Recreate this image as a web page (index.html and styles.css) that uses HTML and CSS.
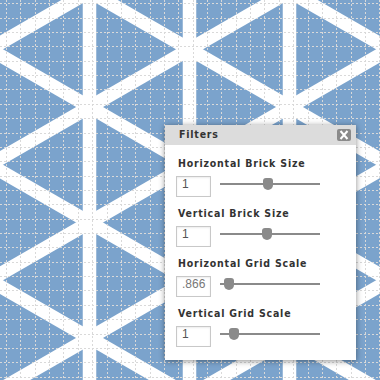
FILE: index.html
```html
<!DOCTYPE html>
<html>
<head>
<meta charset="utf-8">
<link rel="stylesheet" href="styles.css">
</head>
<body>
<div class="desktop">
  <svg class="bg" width="380" height="380" viewBox="0 0 380 380">
    <rect width="380" height="380" fill="#7ba3cc"/>
    <g stroke="#ffffff" stroke-width="13.5">
      <line x1="-10.5" y1="-10" x2="-10.5" y2="390"/>
      <line x1="89.5" y1="-10" x2="89.5" y2="390"/>
      <line x1="189.5" y1="-10" x2="189.5" y2="390"/>
      <line x1="289.5" y1="-10" x2="289.5" y2="390"/>
      <line x1="389.5" y1="-10" x2="389.5" y2="390"/>
      <line x1="-20" y1="-187.16" x2="400" y2="55.33"/>
      <line x1="-20" y1="-71.69" x2="400" y2="170.80"/>
      <line x1="-20" y1="43.78" x2="400" y2="286.27"/>
      <line x1="-20" y1="159.25" x2="400" y2="401.74"/>
      <line x1="-20" y1="274.72" x2="400" y2="517.21"/>
      <line x1="-20" y1="54.77" x2="400" y2="-187.74"/>
      <line x1="-20" y1="170.24" x2="400" y2="-72.27"/>
      <line x1="-20" y1="285.71" x2="400" y2="43.20"/>
      <line x1="-20" y1="401.18" x2="400" y2="158.67"/>
      <line x1="-20" y1="516.65" x2="400" y2="274.14"/>
    </g>
    <g stroke="#d9d9d9" stroke-width="1" stroke-dasharray="2 2">
      <line x1="6.5" y1="0" x2="6.5" y2="380"/>
      <line x1="20.5" y1="0" x2="20.5" y2="380"/>
      <line x1="35.5" y1="0" x2="35.5" y2="380"/>
      <line x1="49.5" y1="0" x2="49.5" y2="380"/>
      <line x1="63.5" y1="0" x2="63.5" y2="380"/>
      <line x1="78.5" y1="0" x2="78.5" y2="380"/>
      <line x1="92.5" y1="0" x2="92.5" y2="380"/>
      <line x1="107.5" y1="0" x2="107.5" y2="380"/>
      <line x1="121.5" y1="0" x2="121.5" y2="380"/>
      <line x1="135.5" y1="0" x2="135.5" y2="380"/>
      <line x1="150.5" y1="0" x2="150.5" y2="380"/>
      <line x1="164.5" y1="0" x2="164.5" y2="380"/>
      <line x1="178.5" y1="0" x2="178.5" y2="380"/>
      <line x1="193.5" y1="0" x2="193.5" y2="380"/>
      <line x1="207.5" y1="0" x2="207.5" y2="380"/>
      <line x1="221.5" y1="0" x2="221.5" y2="380"/>
      <line x1="236.5" y1="0" x2="236.5" y2="380"/>
      <line x1="250.5" y1="0" x2="250.5" y2="380"/>
      <line x1="264.5" y1="0" x2="264.5" y2="380"/>
      <line x1="279.5" y1="0" x2="279.5" y2="380"/>
      <line x1="293.5" y1="0" x2="293.5" y2="380"/>
      <line x1="308.5" y1="0" x2="308.5" y2="380"/>
      <line x1="322.5" y1="0" x2="322.5" y2="380"/>
      <line x1="336.5" y1="0" x2="336.5" y2="380"/>
      <line x1="351.5" y1="0" x2="351.5" y2="380"/>
      <line x1="365.5" y1="0" x2="365.5" y2="380"/>
      <line x1="379.5" y1="0" x2="379.5" y2="380"/>
      <line x1="0" y1="3.5" x2="380" y2="3.5"/>
      <line x1="0" y1="18.5" x2="380" y2="18.5"/>
      <line x1="0" y1="32.5" x2="380" y2="32.5"/>
      <line x1="0" y1="46.5" x2="380" y2="46.5"/>
      <line x1="0" y1="61.5" x2="380" y2="61.5"/>
      <line x1="0" y1="75.5" x2="380" y2="75.5"/>
      <line x1="0" y1="89.5" x2="380" y2="89.5"/>
      <line x1="0" y1="104.5" x2="380" y2="104.5"/>
      <line x1="0" y1="118.5" x2="380" y2="118.5"/>
      <line x1="0" y1="133.5" x2="380" y2="133.5"/>
      <line x1="0" y1="147.5" x2="380" y2="147.5"/>
      <line x1="0" y1="161.5" x2="380" y2="161.5"/>
      <line x1="0" y1="176.5" x2="380" y2="176.5"/>
      <line x1="0" y1="190.5" x2="380" y2="190.5"/>
      <line x1="0" y1="204.5" x2="380" y2="204.5"/>
      <line x1="0" y1="219.5" x2="380" y2="219.5"/>
      <line x1="0" y1="233.5" x2="380" y2="233.5"/>
      <line x1="0" y1="247.5" x2="380" y2="247.5"/>
      <line x1="0" y1="262.5" x2="380" y2="262.5"/>
      <line x1="0" y1="276.5" x2="380" y2="276.5"/>
      <line x1="0" y1="290.5" x2="380" y2="290.5"/>
      <line x1="0" y1="305.5" x2="380" y2="305.5"/>
      <line x1="0" y1="319.5" x2="380" y2="319.5"/>
      <line x1="0" y1="334.5" x2="380" y2="334.5"/>
      <line x1="0" y1="348.5" x2="380" y2="348.5"/>
      <line x1="0" y1="362.5" x2="380" y2="362.5"/>
      <line x1="0" y1="377.5" x2="380" y2="377.5"/>
    </g>
  </svg>

  <div class="panel">
    <div class="panel-head">
      <span class="panel-title">Filters</span>
      <span class="close">
        <svg width="14" height="12" viewBox="0 0 14 12"><path d="M3.5 2 L10.5 10 M10.5 2 L3.5 10" stroke="#fff" stroke-width="2" fill="none"/></svg>
      </span>
    </div>
    <div class="panel-body">
      <div class="field">
        <div class="label">Horizontal Brick Size</div>
        <div class="control">
          <div class="num">1</div>
          <div class="slider"><div class="thumb" style="left:43px"></div></div>
        </div>
      </div>
      <div class="field">
        <div class="label">Vertical Brick Size</div>
        <div class="control">
          <div class="num">1</div>
          <div class="slider"><div class="thumb" style="left:42px"></div></div>
        </div>
      </div>
      <div class="field">
        <div class="label">Horizontal Grid Scale</div>
        <div class="control">
          <div class="num dim">.866</div>
          <div class="slider"><div class="thumb" style="left:4px"></div></div>
        </div>
      </div>
      <div class="field">
        <div class="label">Vertical Grid Scale</div>
        <div class="control">
          <div class="num">1</div>
          <div class="slider"><div class="thumb" style="left:9px"></div></div>
        </div>
      </div>
    </div>
  </div>
</div>
</body>
</html>
```

FILE: styles.css
```css
html, body {
  margin: 0;
  padding: 0;
  background: #7ba3cc;
}

.desktop {
  position: relative;
  width: 380px;
  height: 380px;
  overflow: hidden;
}

.bg {
  display: block;
}

.panel {
  position: absolute;
  left: 165px;
  top: 125px;
  width: 191px;
  height: 235px;
  background: #ffffff;
  box-shadow: 0 1px 6px rgba(0, 0, 0, 0.45);
  display: flex;
  flex-direction: column;
}

.panel-head {
  height: 20px;
  background: #dcdcdc;
  display: flex;
  align-items: center;
  justify-content: space-between;
  padding: 0 5px 0 14px;
}

.panel-title {
  font-family: "DejaVu Sans Condensed", "DejaVu Sans", sans-serif;
  font-stretch: condensed;
  font-weight: bold;
  font-size: 10.5px;
  letter-spacing: 0.8px;
  color: #333333;
  line-height: 14px;
  margin-top: -2px;
}

.close {
  width: 14px;
  height: 12px;
  background: #8a8a8a;
  border-radius: 2px;
  display: block;
  margin-top: -1px;
}

.close svg {
  display: block;
}

.panel-body {
  padding: 11px 0 0 11px;
  display: flex;
  flex-direction: column;
  gap: 9px;
}

.field {
  display: flex;
  flex-direction: column;
  gap: 6px;
}

.label {
  font-family: "DejaVu Sans Condensed", "DejaVu Sans", sans-serif;
  font-stretch: condensed;
  font-weight: bold;
  font-size: 10.5px;
  letter-spacing: 0.8px;
  line-height: 14px;
  height: 14px;
  color: #333333;
  padding-left: 2px;
}

.control {
  display: flex;
  align-items: flex-start;
  height: 21px;
}

.num {
  box-sizing: border-box;
  width: 35px;
  height: 21px;
  border: 1px solid #c8c8c8;
  box-shadow: inset 0 1px 2px rgba(0, 0, 0, 0.08);
  font-family: "Liberation Sans", Arial, sans-serif;
  font-size: 12px;
  line-height: 14px;
  color: #555555;
  padding-left: 5px;
}

.num.dim {
  color: #777777;
}

.slider {
  position: relative;
  width: 100px;
  height: 12px;
  margin: 2px 0 0 9px;
  background: linear-gradient(#8a8a8a, #8a8a8a) center / 100% 2px no-repeat;
}

.thumb {
  position: absolute;
  top: 0;
  width: 10px;
  height: 12px;
  background: #8a8a8a;
  border-radius: 3px 3px 5px 5px;
}
```
